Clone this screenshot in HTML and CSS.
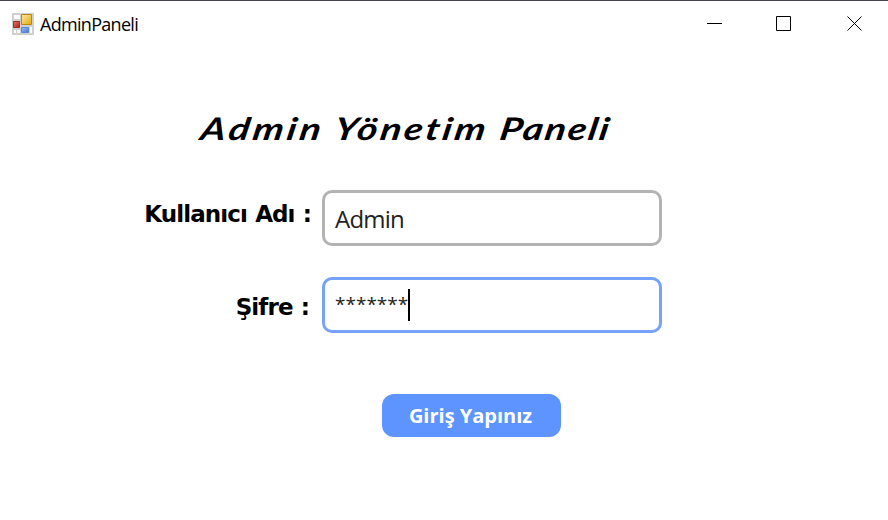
FILE: index.html
```html
<!DOCTYPE html>
<html lang="tr">
<head>
<meta charset="utf-8">
<title>AdminPaneli</title>
<link rel="stylesheet" href="styles.css">
</head>
<body>
<div class="window">
  <header class="titlebar">
    <svg class="app-icon" width="22" height="22" viewBox="0 0 22 22">
      <defs>
        <linearGradient id="gold" x1="0" y1="0" x2="1" y2="1"><stop offset="0" stop-color="#ffeaa0"/><stop offset="1" stop-color="#e3a90c"/></linearGradient>
        <linearGradient id="red" x1="0" y1="0" x2="1" y2="1"><stop offset="0" stop-color="#e77a6c"/><stop offset="1" stop-color="#a81d18"/></linearGradient>
        <linearGradient id="blue" x1="0" y1="0" x2="1" y2="1"><stop offset="0" stop-color="#9cc0ff"/><stop offset="1" stop-color="#3c72d8"/></linearGradient>
      </defs>
      <path fill="#cfcfcf" d="M0 0h22v22H0z"/>
      <path fill="#fff" d="M2 2h6v4H2zM2 17h2v3H2zM5 17h3v3H5zM18 14h2v6h-2z"/>
      <path fill="url(#gold)" stroke="#b98712" d="M9.500 1.500h10v10h-10z"/>
      <path fill="url(#red)" stroke="#a62c25" d="M1.500 8.500h6v6h-6z"/>
      <path fill="url(#blue)" stroke="#5a86d6" d="M9.500 14.500h7v5h-7z"/>
    </svg>
    <span class="caption">AdminPaneli</span>
    <nav class="controls">
      <svg width="16" height="16" viewBox="0 0 16 16"><path d="M0 7.500h15"/></svg>
      <svg width="16" height="16" viewBox="0 0 16 16"><path d="M.5.500h14v14H.5z"/></svg>
      <svg width="16" height="16" viewBox="0 0 16 16"><path d="M.5.500l14 14M14.500.500l-14 14"/></svg>
    </nav>
  </header>
  <main class="panel">
    <h1 class="heading"><span class="w1">Admin</span><span class="w2">Yönetim</span><span class="w3">Paneli</span></h1>
    <div class="row">
      <label class="label label-user">Kullanıcı Adı :</label>
      <div class="field"><span class="value">Admin</span></div>
    </div>
    <div class="row">
      <label class="label label-pass">Şifre :</label>
      <div class="field focused"><span class="value stars">*******</span><i class="caret"></i></div>
    </div>
    <button class="submit">Giriş Yapınız</button>
  </main>
</div>
</body>
</html>
```
FILE: styles.css
```css
* { box-sizing: border-box; }
body { margin: 0; background: #fff; color: #000; }
.window { width: 888px; height: 520px; border-top: 1px solid #45434f; overflow: hidden; }
.titlebar { display: flex; align-items: center; height: 46px; padding: 0 25px 0 12px; }
.caption { margin: 0 0 1px 6px; font: 18px/24px "Open Sans", sans-serif; letter-spacing: -0.7px; }
.controls { display: flex; gap: 54px; margin-left: auto; }
.controls svg { fill: none; stroke: #000; stroke-width: 1; }
.controls svg:nth-child(2) { margin: 0 1px 0 -1px; }
.panel { display: flex; flex-direction: column; padding-top: 57px; }
.heading { display: flex; width: 400px; margin: 0 0 0 199px; height: 50px; font: italic 700 31px/48px Lato, sans-serif; transform: scaleX(1.25) skewX(-8deg); transform-origin: 0 75%; }
.w1 { letter-spacing: 2.6px; margin-right: 8.5px; }
.w2 { letter-spacing: 2.2px; margin-right: 9.5px; }
.w3 { letter-spacing: 1.4px; }
.row { display: flex; height: 56px; margin: 36px 0 31px; }
.row + .row { margin-top: 0; }
.label { width: 322px; padding-right: 11px; text-align: right; white-space: nowrap; font: 700 23px/48px "DejaVu Sans", sans-serif; letter-spacing: -0.9px; word-spacing: 1px; }
.label-pass { padding-right: 13px; line-height: 60px; }
.field { display: flex; align-items: center; width: 340px; padding-left: 10px; border: 3px solid #b3b3b3; border-radius: 10px; }
.focused { border-color: #76a1fc; }
.value { padding-top: 1px; font: 24px/50px "Open Sans", sans-serif; letter-spacing: -0.8px; color: #222; }
.stars { padding: 0 0 3px; font-size: 19px; letter-spacing: 0; }
.caret { width: 2px; height: 32px; margin-top: -1px; background: #000; }
.submit { width: 179px; height: 43px; margin: 30px 0 0 382px; padding: 0 2px 0 0; border: 0; border-radius: 12px; background: #5e94ff; color: #fff; font: 700 20px/44px "Open Sans", sans-serif; }
```
